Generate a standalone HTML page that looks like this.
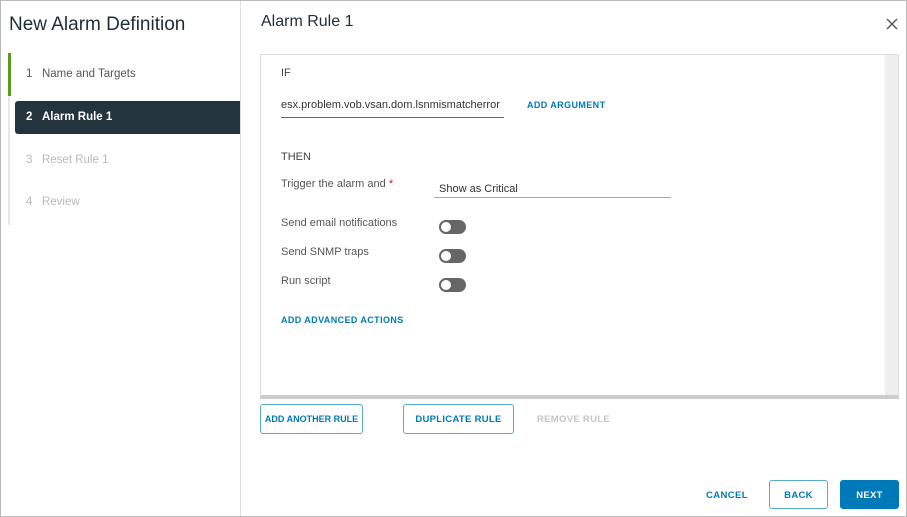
<!DOCTYPE html>
<html><head><style>
*{box-sizing:border-box;margin:0;padding:0}
body{width:907px;height:517px;position:relative;background:#fff;font-family:"Liberation Sans",sans-serif;color:#333;overflow:hidden}
.a{position:absolute;white-space:nowrap}
.lnk{color:#0079b8;font-size:9px;font-weight:bold;letter-spacing:.4px}
.tog{position:absolute;left:439px;width:27px;height:14px;border-radius:7px;background:#666}
.tog:after{content:"";position:absolute;left:2px;top:2px;width:10px;height:10px;border-radius:50%;background:#fff}
.btn{position:absolute;border:1px solid #5aa9cf;border-radius:3px;color:#0079b8;font-size:9.5px;font-weight:bold;letter-spacing:.3px;display:flex;align-items:center;justify-content:center;white-space:nowrap}
.lbl{font-size:11px;color:#565656}
</style></head><body>
<div class="a" style="left:0;top:0;width:907px;height:517px;border:1px solid #bbb"></div>
<div class="a" style="left:240px;top:1px;width:1px;height:515px;background:#ddd"></div>
<div class="a" style="left:9px;top:14px;font-size:19px;color:#1f2d36">New Alarm Definition</div>
<div class="a" style="left:8px;top:53px;width:2px;height:172px;background:#e8e8e8"></div>
<div class="a" style="left:8px;top:53px;width:3px;height:43px;background:#5a9a1e"></div>
<div class="a" style="left:26px;top:68px;font-size:11.5px;color:#565656">1&nbsp;&nbsp;&nbsp;Name and Targets</div>
<div class="a" style="left:15px;top:101px;width:225px;height:33px;background:#23343d;border-radius:3px 0 0 3px"></div>
<div class="a" style="left:26px;top:111px;font-size:11.5px;color:#fff;font-weight:bold">2&nbsp;&nbsp;&nbsp;Alarm Rule 1</div>
<div class="a" style="left:26px;top:154px;font-size:11.5px;color:#b8b8b8">3&nbsp;&nbsp;&nbsp;Reset Rule 1</div>
<div class="a" style="left:26px;top:196px;font-size:11.5px;color:#b8b8b8">4&nbsp;&nbsp;&nbsp;Review</div>
<div class="a" style="left:261px;top:13px;font-size:16px;color:#1f2d36">Alarm Rule 1</div>
<svg class="a" style="left:886px;top:18px" width="12" height="12"><path d="M1 1L11 11M11 1L1 11" stroke="#555" stroke-width="1.4"/></svg>
<div class="a" style="left:260px;top:54px;width:639px;height:345px;border:1px solid #ddd;border-bottom:4px solid #ccc"></div>
<div class="a" style="left:885px;top:55px;width:13px;height:340px;background:#eee"></div>
<div class="a lbl" style="left:281px;top:67px;color:#444">IF</div>
<div class="a" style="left:281px;top:99px;font-size:11px;color:#333;width:222px;overflow:hidden">esx.problem.vob.vsan.dom.lsnmismatcherror</div>
<div class="a" style="left:281px;top:117px;width:223px;height:1px;background:#666"></div>
<div class="a lnk" style="left:527px;top:100px">ADD ARGUMENT</div>
<div class="a lbl" style="left:281px;top:151px;color:#444">THEN</div>
<div class="a lbl" style="left:281px;top:178px">Trigger the alarm and <span style="color:#c92100">*</span></div>
<div class="a" style="left:439px;top:183px;font-size:11px;color:#333">Show as Critical</div>
<div class="a" style="left:434px;top:197px;width:237px;height:1px;background:#aaa"></div>
<div class="a lbl" style="left:281px;top:217px">Send email notifications</div>
<div class="tog" style="top:220px"></div>
<div class="a lbl" style="left:281px;top:246px">Send SNMP traps</div>
<div class="tog" style="top:249px"></div>
<div class="a lbl" style="left:281px;top:275px">Run script</div>
<div class="tog" style="top:278px"></div>
<div class="a lnk" style="left:281px;top:315px">ADD ADVANCED ACTIONS</div>
<div class="btn" style="left:260px;top:404px;width:103px;height:30px;font-size:9px;letter-spacing:0">ADD ANOTHER RULE</div>
<div class="btn" style="left:403px;top:404px;width:111px;height:30px">DUPLICATE RULE</div>
<div class="a" style="left:537px;top:414px;font-size:9.5px;font-weight:bold;letter-spacing:.3px;color:#c5c5c5">REMOVE RULE</div>
<div class="a lnk" style="left:706px;top:490px;font-size:9.5px">CANCEL</div>
<div class="btn" style="left:769px;top:480px;width:59px;height:29px;padding-top:2px">BACK</div>
<div class="btn" style="left:840px;top:480px;width:59px;height:29px;background:#0079b8;color:#fff;border-color:#0079b8;padding-top:2px">NEXT</div>
</body></html>
